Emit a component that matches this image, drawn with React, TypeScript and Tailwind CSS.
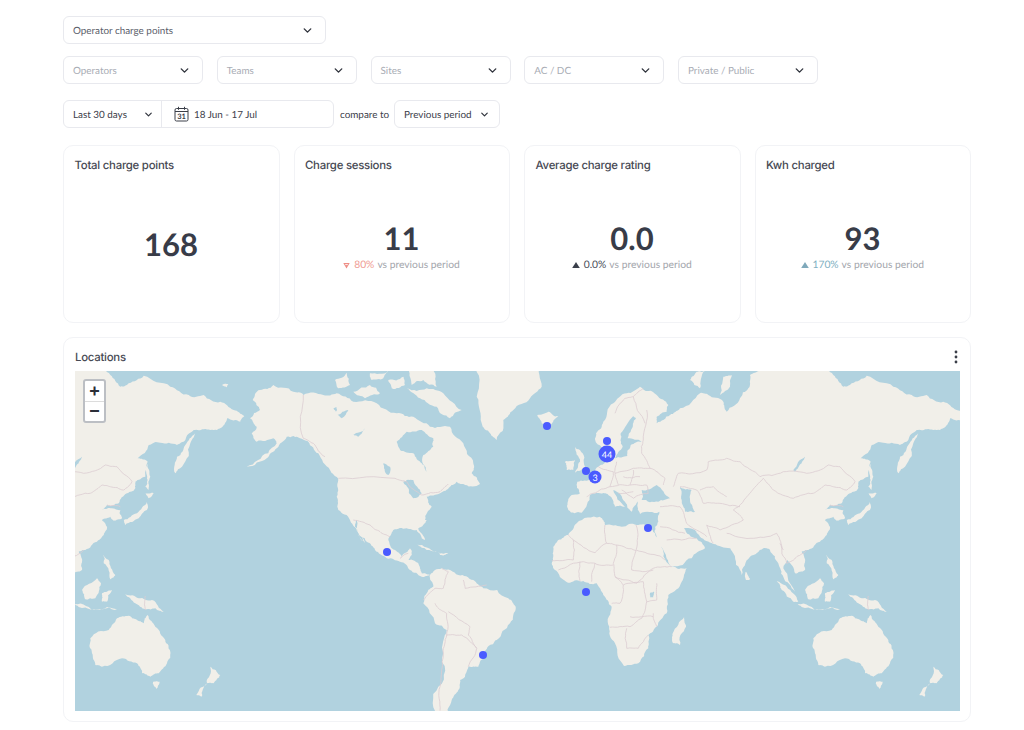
import React from "react";
import { ChevronDown } from "lucide-react";

type Frame = [number, number];
const L5: Frame = [60, 330];
const L7: Frame = [60, 520];
const R6: Frame = [500, 330];
const R8: Frame = [500, 520];

const pg = (f: Frame, s: string) =>
  s
    .trim()
    .split(/\s+/)
    .map((pt) => {
      const [x, y] = pt.split(",").map(Number);
      return `${(f[0] + x / 3).toFixed(1)},${(f[1] + y / 3).toFixed(1)}`;
    })
    .join(" ");

let seed = 7;
const rnd = () => {
  seed = (seed * 16807) % 2147483647;
  return seed / 2147483647 - 0.5;
};

// roughens a straight-edged outline into a natural looking coast or border
const rough = (s: string, closed: boolean, amount: number) => {
  let pts = s.split(" ").map((p) => p.split(",").map(Number));
  for (let round = 0; round < 3; round++) {
    const next: number[][] = [];
    const count = closed ? pts.length : pts.length - 1;
    for (let i = 0; i < count; i++) {
      const a = pts[i];
      const b = pts[(i + 1) % pts.length];
      const dx = b[0] - a[0];
      const dy = b[1] - a[1];
      const t = rnd() * amount;
      next.push(a, [(a[0] + b[0]) / 2 - dy * t, (a[1] + b[1]) / 2 + dx * t]);
    }
    if (!closed) next.push(pts[pts.length - 1]);
    pts = next;
  }
  return pts.map((p) => `${p[0].toFixed(1)},${p[1].toFixed(1)}`).join(" ");
};

const coast = (list: string[]) => list.map((p) => rough(p, true, 0.28));
const lines = (list: string[]) => list.map((p) => rough(p, false, 0.16));

const eurasiaLand = coast([
  pg(R6, "290,340 288,310 310,275 340,220 380,190 420,170 470,195 505,225 500,245 470,260 470,280 510,255 540,235 600,190 625,195 670,215 680,245 720,205 745,175 750,135 780,122 780,100 960,100 1000,135 1030,170 1055,160 1100,137 1180,170 1235,195 1280,195 1330,215 1370,240 1402,258 1390,275 1350,265 1340,285 1320,300 1280,298 1250,300 1225,330 1200,345 1150,338 1115,345 1082,385 1112,395 1105,440 1075,455 1075,475 1050,490 1025,520 990,525 975,540 1005,535 1030,540 1035,565 1010,572 1000,560 975,570 990,590") +
    " " +
    pg(R8, "990,25 975,50 960,65 925,90 905,95 915,125 915,150 885,160 862,120 850,145 885,215 850,170 835,130 810,90 790,85 750,110 725,165 700,100 690,85 640,72 600,50 585,30 552,25 590,55 615,85 575,115 515,140 495,100 470,50 465,20 475,5") +
    " " +
    pg(R6, "478,545 420,552 412,525 415,510 395,545 375,515 340,480 375,530 345,530 325,495 300,490 270,495 245,548 205,540 205,507 240,490 232,455 275,445 295,410 318,395 315,365"),
  pg(R8, "160,80 175,60 205,45 230,10 300,-10 315,15 365,20 410,15 450,15 465,40 490,95 515,140 560,145 545,185 505,225 500,280 470,320 445,345 445,385 415,430 372,438 345,370 328,320 335,260 310,225 290,190 250,183 210,188 175,160 155,130 158,100"),
  pg(R6, "112,255 145,245 175,260 150,285 125,280"),
  pg(R6, "225,350 240,360 255,410 225,428 240,395"),
  pg(R6, "195,395 225,390 220,420 200,420"),
  pg(R6, "570,150 590,125 615,122 600,175"),
  pg(R6, "660,195 670,140 695,135 690,170"),
  pg(R6, "1240,340 1255,310 1225,345 1200,380 1195,430 1215,410"),
  pg(R6, "1110,400 1120,440 1115,480 1105,470 1108,430"),
  pg(R6, "1105,490 1130,490 1115,505"),
  pg(R6, "1110,515 1110,540 1085,565 1045,585 1040,570 1080,550"),
  pg(R8, "738,155 750,178 738,180"),
  pg(R8, "553,290 558,320 540,375 520,370 518,340"),
  pg(R8, "830,183 860,200 895,245 880,245 845,210"),
  pg(R8, "893,252 960,268 1020,268 930,265"),
  pg(R8, "915,210 960,175 972,190 955,235 925,238"),
  pg(R8, "975,220 1005,210 990,245 975,245"),
  pg(R8, "980,105 995,120 1015,165 1000,178 980,130"),
  pg(R8, "1045,222 1085,235 1125,240 1160,275 1135,265 1105,268 1075,250"),
  pg(R8, "940,355 995,330 1020,295 1055,287 1080,300 1100,310 1112,285 1135,320 1165,360 1180,395 1170,430 1145,460 1120,470 1095,460 1080,430 1035,415 975,440 955,435 945,400"),
  pg(R8, "1128,485 1148,485 1138,507"),
  pg(R8, "1300,440 1330,465 1310,490 1290,490"),
  pg(R8, "1290,490 1275,530 1258,525 1285,495"),
]);

const eurasiaWater = coast([
  pg(R6, "345,385 368,350 362,310 400,258 408,264 393,300 383,325 425,335 392,345 382,378"),
  pg(R6, "425,480 470,465 510,505 475,515 425,510"),
  pg(R6, "540,470 575,480 570,510 585,545 555,545 545,510"),
  pg(R6, "880,420 915,380 905,400 885,425"),
  pg(R8, "450,218 462,215 460,232 450,232"),
]);

const eurasiaBorders = lines([
  pg(R8, "205,45 220,60 285,98 320,70 315,15"),
  pg(R8, "320,70 350,75 340,130 345,170 410,190 460,145 515,140"),
  pg(R8, "408,15 408,90 480,108 495,120"),
  pg(R8, "350,75 408,92 395,150 460,150"),
  pg(R8, "220,60 220,120 155,122"),
  pg(R8, "175,150 250,125 285,130 275,185"),
  pg(R8, "285,130 340,135"),
  pg(R8, "240,125 240,183"),
  pg(R8, "345,170 370,195 360,250 335,250"),
  pg(R8, "370,195 430,185 440,245 425,295 390,320 330,322"),
  pg(R8, "470,190 470,240 440,245"),
  pg(R8, "380,325 380,385 415,385 445,345"),
  pg(R8, "460,280 470,320"),
  pg(R8, "390,290 460,290"),
  pg(R6, "345,250 375,205 400,200 430,175"),
  pg(R6, "400,200 435,280"),
  pg(R6, "440,240 430,330 425,370 450,415 495,445 490,465"),
  pg(R6, "350,395 345,430 400,415 450,415"),
  pg(R6, "295,410 340,425 330,470 280,490 260,500"),
  pg(R6, "330,470 390,465 440,465 445,490 400,505 365,480"),
  pg(R6, "390,465 400,420"),
  pg(R6, "345,430 355,465"),
  pg(R6, "370,440 420,440"),
  pg(R6, "355,490 400,485"),
  pg(R6, "520,470 535,430 620,420 625,395 680,385 720,395 780,440 850,425 920,430 985,405 1020,410 1065,455 1040,480 1000,470 975,465 940,490 880,505 820,480 790,445"),
  pg(R6, "540,470 590,480 610,520 660,520 720,530"),
  pg(R6, "790,445 750,490 700,540 730,570"),
  pg(R6, "600,480 640,470 680,500"),
  pg(R6, "480,530 540,530 560,580 620,620"),
  pg(R8, "620,15 660,30 730,0"),
  pg(R8, "680,40 750,55 830,40 850,90"),
  pg(R8, "840,70 860,130 890,110 920,90"),
  pg(R8, "480,20 555,40"),
  pg(R8, "500,60 590,55"),
  pg(R8, "620,15 640,70"),
  pg(R6, "990,525 1030,530"),
  pg(R8, "1105,228 1105,270"),
]);

const americasLand = coast([
  pg(L5, "578,210 600,180 640,165 700,185 730,195 790,195 830,190 880,215 950,220 1010,250 1060,260 1110,290 1170,290 1210,340 1240,400 1235,430 1260,462 1215,465 1190,455 1170,470 1140,490 1100,500 1115,530 1095,570") +
    " " +
    pg(L7, "1100,0 1075,25 1095,60 1085,55 1070,30 1040,25 1000,30 985,60 1005,90 1025,110 1050,85 1055,105 1045,120 1075,130 1085,160 1110,165 1085,170 1050,150 1020,125 980,115 945,90 920,65 890,30 870,0") +
    " " +
    pg(L5, "835,540 830,500 835,450 810,420 775,370 745,335 720,325 680,320 650,355 620,385 560,410 625,370 650,340 640,325 590,335 575,310 590,290 570,265 600,240"),
  pg(L7, "1110,165 1145,145 1195,165 1240,180 1270,205 1345,235 1367,260 1350,310 1310,360 1290,375 1270,410 1255,440 1225,440 1215,470 1200,480 1195,510 1175,540 1165,600 1125,600 1135,500 1150,400 1160,330 1125,310 1090,250 1105,210 1120,200"),
  pg(R6, "125,100 125,170 90,205 40,240 10,270 -10,330 -30,310 -55,280 -70,200 -75,100"),
  pg(L5, "825,150 860,128 870,165 835,175"),
  pg(L5, "880,185 930,165 960,190 915,205"),
  pg(L5, "930,130 985,122 970,145 935,150"),
  pg(L5, "985,150 1030,140 1035,165 995,175"),
  pg(L5, "1040,110 1115,110 1130,170 1090,150 1055,165"),
  pg(L5, "1040,175 1100,175 1150,190 1205,240 1170,265 1130,230 1080,205"),
  pg(L7, "1070,72 1130,95 1100,90"),
  pg(L7, "1135,95 1165,100 1140,105"),
  pg(L7, "880,10 915,70 895,40"),
  pg(L5, "485,165 505,162 500,172"),
]);

const americasWater = coast([
  pg(L5, "1010,335 1040,305 1085,300 1120,325 1120,350 1090,375 1100,425 1085,400 1060,370 1020,360"),
  pg(L5, "1030,455 1060,450 1085,490 1060,505 1045,475"),
  pg(L5, "832,255 865,240 845,265"),
  pg(L5, "880,315 915,295 895,320"),
  pg(L5, "970,400 990,410 985,435 975,425"),
  pg(L5, "820,235 830,232 828,245"),
  pg(L7, "890,0 915,70 905,60 885,20"),
]);

const americasBorders = lines([
  pg(L5, "835,445 1005,445 1040,455 1085,495 1140,485 1165,462"),
  pg(L5, "730,195 730,325 760,340 795,380"),
  pg(L7, "880,0 930,15 960,35 990,50"),
  pg(L7, "1020,115 1045,100"),
  pg(L7, "1090,240 1125,205 1150,205 1165,155 1145,145"),
  pg(L7, "1125,250 1135,265 1160,280 1160,345"),
  pg(L7, "1165,275 1230,320 1225,345 1250,385 1225,440"),
  pg(L7, "1210,180 1215,205 1280,195"),
  pg(L7, "1160,345 1205,345 1250,385"),
  pg(L7, "1160,345 1150,400 1140,500 1140,572"),
]);

function WorldMap() {
  const asia = (
    <>
      {eurasiaLand.map((p, i) => (
        <polygon key={i} points={p} fill="#f1efe9" />
      ))}
      {eurasiaWater.map((p, i) => (
        <polygon key={i} points={p} fill="#b1d2df" />
      ))}
      {eurasiaBorders.map((p, i) => (
        <polyline key={i} points={p} fill="none" stroke="#dccdd2" strokeWidth="0.8" />
      ))}
    </>
  );
  return (
    <svg viewBox="75 371 885 340" className="block h-full w-full" preserveAspectRatio="none">
      <rect x="75" y="371" width="885" height="340" fill="#b1d2df" />
      {asia}
      <g transform="translate(-723 0)">{asia}</g>
      {americasLand.map((p, i) => (
        <polygon key={i} points={p} fill="#f1efe9" />
      ))}
      {americasWater.map((p, i) => (
        <polygon key={i} points={p} fill="#b1d2df" />
      ))}
      {americasBorders.map((p, i) => (
        <polyline key={i} points={p} fill="none" stroke="#dccdd2" strokeWidth="0.8" />
      ))}
    </svg>
  );
}

function Select({ label, muted, width }: { label: string; muted?: boolean; width: string }) {
  return (
    <div className={`flex h-7 items-center justify-between rounded-md border border-[#e8e9ee] bg-white pl-[9px] pr-[11px] ${width}`}>
      <span className={`pt-[3px] text-[9.9px] ${muted ? "text-[#a9adb5]" : "text-[#5b606b]"}`}>{label}</span>
      <ChevronDown className="text-[#2f333c]" size={13} strokeWidth={2.6} />
    </div>
  );
}

function CalendarIcon() {
  return (
    <svg width="15" height="16" viewBox="0 0 15 16" fill="none" stroke="#3a3e48" strokeWidth="1">
      <rect x="1" y="2.5" width="13" height="12.5" rx="1.5" />
      <path d="M1 5.5h13M4.5 .8v3M10.5 .8v3" />
      <text x="7.5" y="13" textAnchor="middle" fontSize="7.5" fontWeight="700" fill="#3a3e48" stroke="none" fontFamily="Lato, sans-serif">
        31
      </text>
    </svg>
  );
}

function Trend({ kind }: { kind: "down" | "flat" | "up" }) {
  if (kind === "down")
    return (
      <svg width="7" height="7" viewBox="0 0 7 7" className="mr-[4px]">
        <path d="M.3 1h6.4L3.5 6.6z" fill="#ee8d85" />
        <path d="M2.2 2.6h2.6" stroke="#fff" strokeWidth="0.9" />
      </svg>
    );
  return (
    <svg width="8" height="6" viewBox="0 0 8 6" className="mr-[3.5px]">
      <path d="M4 0l3.8 6H.2z" fill={kind === "flat" ? "#3a3f4a" : "#7fa9bb"} />
    </svg>
  );
}

function StatCard({
  title,
  value,
  kind,
  pct,
  pctClass,
}: {
  title: string;
  value: string;
  kind?: "down" | "flat" | "up";
  pct?: string;
  pctClass?: string;
}) {
  return (
    <div className="flex h-[178px] flex-col rounded-[10px] border border-[#f2f3f6] bg-white pb-2 pl-[10.5px] pr-[11px] pt-[10px]">
      <div className="font-['Inter'] text-[11.4px] font-medium leading-[18px] tracking-[-0.25px] text-[#474a54]">{title}</div>
      <div className={`flex flex-1 flex-col items-center justify-center ${pct ? "pt-[3px]" : ""}`}>
        <div className="text-[31px] font-bold leading-[38px] text-[#383c48]">{value}</div>
        {pct && (
          <div className="mt-px flex items-center text-[10.3px] leading-[14px] text-[#a3a6ac]">
            <Trend kind={kind!} />
            <span className={`mr-[3px] ${pctClass}`}>{pct}</span>
            vs previous period
          </div>
        )}
      </div>
    </div>
  );
}

function Dot({ x, y }: { x: number; y: number }) {
  return (
    <div
      className="absolute h-2 w-2 -translate-x-1/2 -translate-y-1/2 rounded-full bg-[#4a5bff]"
      style={{ left: x - 75, top: y - 371 }}
    />
  );
}

function Cluster({ x, y, n, big }: { x: number; y: number; n: string; big?: boolean }) {
  return (
    <div
      className={`absolute flex -translate-x-1/2 -translate-y-1/2 items-center justify-center rounded-full bg-[#4a5bff] text-[9px] text-white ${big ? "h-[17px] w-[17px]" : "h-[13px] w-[13px]"}`}
      style={{ left: x - 75, top: y - 371 }}
    >
      {n}
    </div>
  );
}

export default function App() {
  return (
    <div className="h-[730px] w-[1024px] overflow-hidden bg-white pl-[63px] pt-4 font-['Lato',sans-serif] [text-rendering:geometricPrecision]">
      <div className="flex w-[908px] flex-col">
        <Select label="Operator charge points" width="w-[263px]" />
        <div className="mt-3 flex gap-[13.75px]">
          {["Operators", "Teams", "Sites", "AC / DC", "Private / Public"].map((l) => (
            <Select key={l} label={l} muted width="w-[140px]" />
          ))}
        </div>
        <div className="mt-4 flex items-center">
          <div className="flex h-7 w-[271px] items-center rounded-md border border-[#e8e9ee] bg-white">
            <div className="flex h-full w-[98px] items-center justify-between border-r border-[#e8e9ee] pl-[9px] pr-[7px]">
              <span className="pt-[3px] text-[9.9px] text-[#3c404a]">Last 30 days</span>
              <ChevronDown className="text-[#2f333c]" size={11} strokeWidth={2.6} />
            </div>
            <div className="ml-3 flex items-center gap-[5px]">
              <CalendarIcon />
              <span className="pt-[2px] text-[9.9px] text-[#3c404a]">18 Jun - 17 Jul</span>
            </div>
          </div>
          <span className="ml-1.5 w-[48px] whitespace-nowrap pt-[2px] text-[9.9px] text-[#3c404a]">compare to</span>
          <div className="ml-1.5 flex h-7 w-[106px] items-center justify-between rounded-md border border-[#e8e9ee] bg-white pl-[9px] pr-[9px]">
            <span className="pt-[3px] text-[9.9px] text-[#3c404a]">Previous period</span>
            <ChevronDown className="text-[#2f333c]" size={11} strokeWidth={2.6} />
          </div>
        </div>
        <div className="mt-[17px] grid grid-cols-4 gap-3.5">
          <StatCard title="Total charge points" value="168" />
          <StatCard title="Charge sessions" value="11" kind="down" pct="80%" pctClass="text-[#ef9c94]" />
          <StatCard title="Average charge rating" value="0.0" kind="flat" pct="0.0%" pctClass="text-[#4a4e59]" />
          <StatCard title="Kwh charged" value="93" kind="up" pct="170%" pctClass="text-[#7fb0c2]" />
        </div>
        <div className="mt-3.5 flex h-[385px] flex-col rounded-[10px] border border-[#f2f3f6] bg-white pb-[10px] pl-[11px] pr-[10px]">
          <div className="flex h-[33px] shrink-0 items-center justify-between pt-[5px]">
            <span className="pt-[2px] font-['Inter'] text-[11.4px] font-medium tracking-[-0.25px] text-[#474a54]">Locations</span>
            <svg width="4" height="14" viewBox="0 0 4 14" className="mr-[2.5px]" fill="#3a3e48">
              <circle cx="2" cy="2" r="1.4" />
              <circle cx="2" cy="7" r="1.4" />
              <circle cx="2" cy="12" r="1.4" />
            </svg>
          </div>
          <div className="relative h-[340px] w-[885px] overflow-hidden">
            <WorldMap />
            <div className="absolute left-2 top-2 flex h-[44px] w-[23px] flex-col rounded-[3px] border-2 border-[#bcbfc4] bg-white font-['Liberation_Sans',sans-serif] text-[#2b2f38]">
              <div className="flex flex-1 items-center justify-center border-b border-[#dcdcdc] text-[18px] font-bold leading-none">+</div>
              <div className="flex flex-1 items-center justify-center text-[18px] font-bold leading-none">−</div>
            </div>
            <Dot x={547} y={426} />
            <Dot x={607} y={441} />
            <Cluster x={607} y={454} n="44" big />
            <Dot x={586} y={471} />
            <Cluster x={595} y={477} n="3" />
            <Dot x={648} y={528} />
            <Dot x={387} y={552} />
            <Dot x={586} y={592} />
            <Dot x={483} y={655} />
          </div>
        </div>
      </div>
    </div>
  );
}
